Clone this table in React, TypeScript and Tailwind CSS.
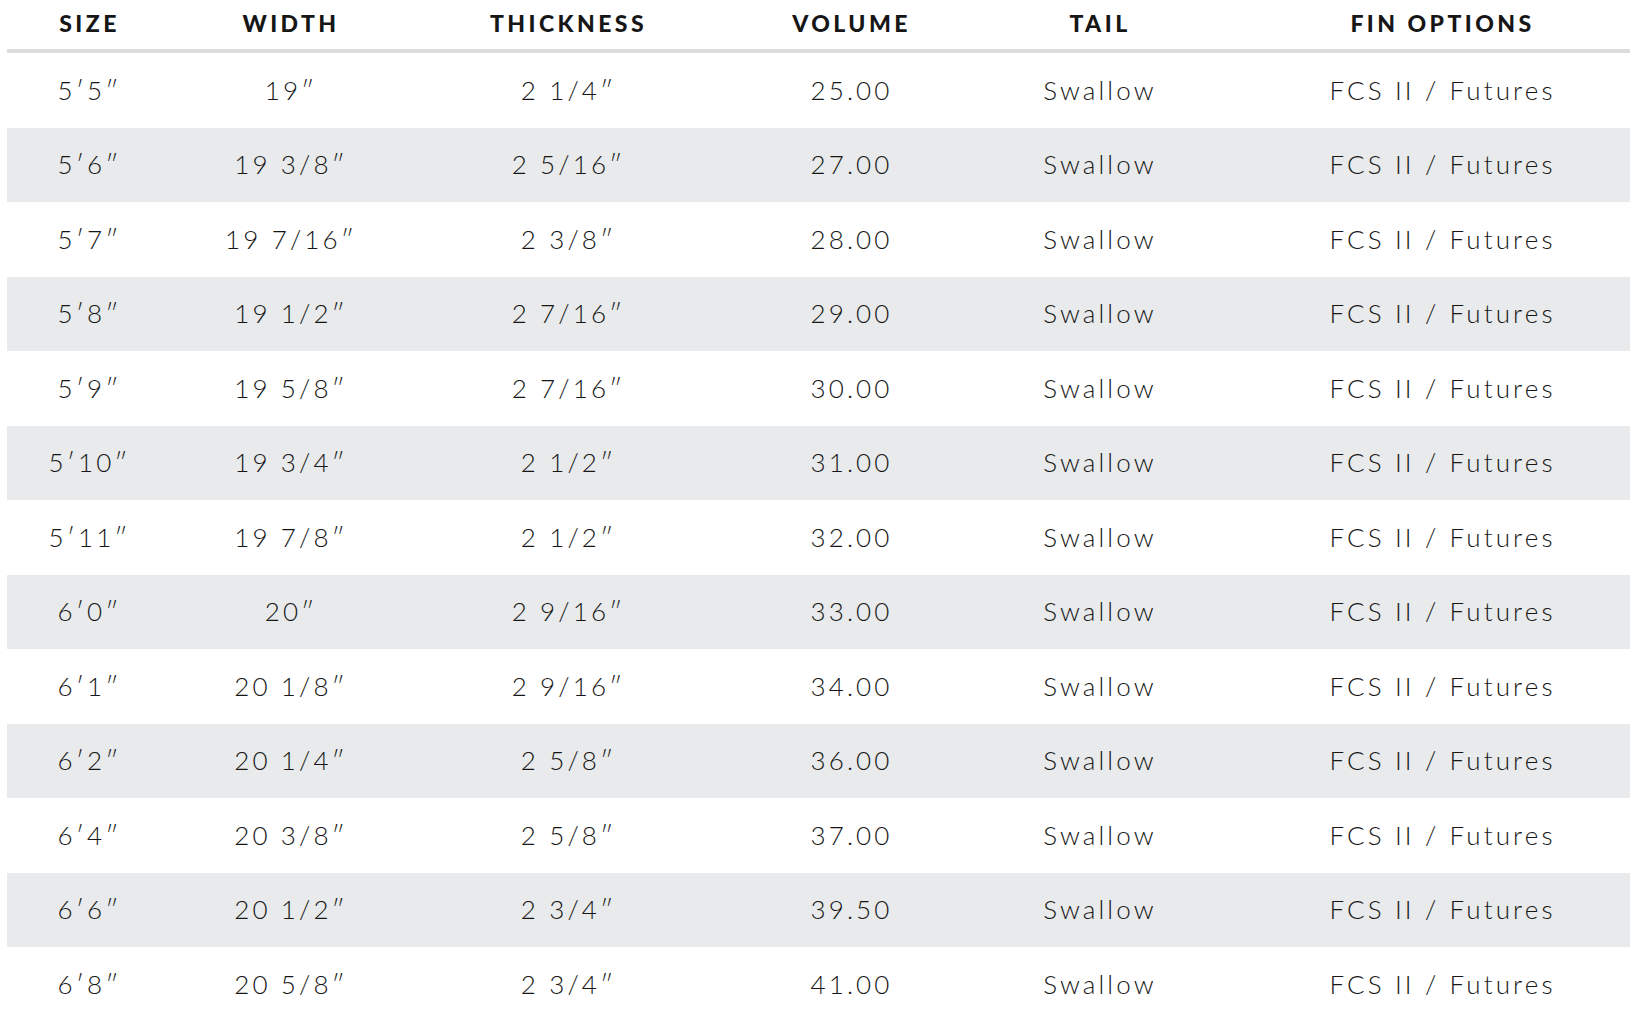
import React from "react";

const rows: string[][] = [
  ["5′5″", "19″", "2 1/4″", "25.00"],
  ["5′6″", "19 3/8″", "2 5/16″", "27.00"],
  ["5′7″", "19 7/16″", "2 3/8″", "28.00"],
  ["5′8″", "19 1/2″", "2 7/16″", "29.00"],
  ["5′9″", "19 5/8″", "2 7/16″", "30.00"],
  ["5′10″", "19 3/4″", "2 1/2″", "31.00"],
  ["5′11″", "19 7/8″", "2 1/2″", "32.00"],
  ["6′0″", "20″", "2 9/16″", "33.00"],
  ["6′1″", "20 1/8″", "2 9/16″", "34.00"],
  ["6′2″", "20 1/4″", "2 5/8″", "36.00"],
  ["6′4″", "20 3/8″", "2 5/8″", "37.00"],
  ["6′6″", "20 1/2″", "2 3/4″", "39.50"],
  ["6′8″", "20 5/8″", "2 3/4″", "41.00"],
];

const headers = ["SIZE", "WIDTH", "THICKNESS", "VOLUME", "TAIL", "FIN OPTIONS"];
const cols = "grid grid-cols-[165px_238px_317px_249px_248px_437px]";

export default function App() {
  return (
    <div className="w-[1630px] h-[1014px] overflow-hidden bg-white pl-[7px] text-[#161616] font-['Lato','Liberation_Sans',sans-serif]">
      <div className="w-[1654px]">
        <div className={`${cols} h-[53px] items-center border-b-4 border-[#dcdcdc]`}>
          {headers.map((h) => (
            <div key={h} className="text-center text-[23px] font-black tracking-[0.15em] pb-[3px]">
              {h}
            </div>
          ))}
        </div>
        {rows.map((r, i) => (
          <div
            key={i}
            className={`${cols} h-[74.5px] items-center ${i % 2 === 1 ? "bg-[#e8eaeb]" : "bg-white"}`}
          >
            {[...r, "Swallow", "FCS II / Futures"].map((c, j) => (
              <div key={j} className="text-center text-[26px] font-light tracking-[0.12em]">
                {c}
              </div>
            ))}
          </div>
        ))}
      </div>
    </div>
  );
}
